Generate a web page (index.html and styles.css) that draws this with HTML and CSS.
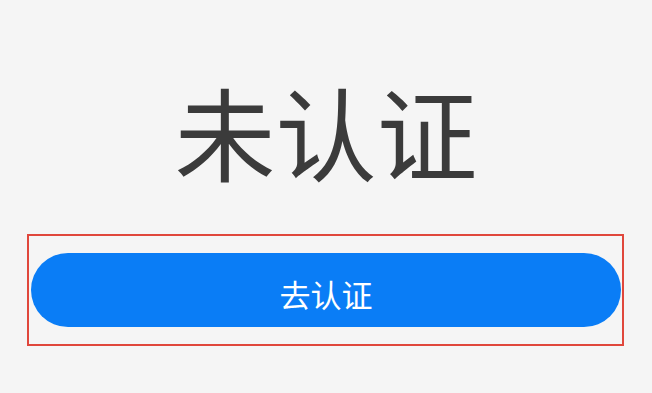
FILE: index.html
```html
<!DOCTYPE html>
<html lang="zh-CN">
<head>
    <meta charset="UTF-8">
    <meta name="viewport" content="width=device-width, initial-scale=1.0">
    <title>未认证</title>
    <link rel="stylesheet" href="styles.css">
</head>
<body>
    <!-- Status -->
    <main class="page">
        <h1 class="status">未认证</h1>

        <!-- Verify Action -->
        <div class="action-frame">
            <button class="verify-btn">去认证</button>
        </div>
    </main>
</body>
</html>
```

FILE: styles.css
```css
/* Global Styles */
body {
    margin: 0;
    padding: 0;
    background-color: #f5f5f5;
    font-family: "Noto Sans CJK SC", "Noto Sans", sans-serif;
}

.page {
    height: 393px;
    padding-top: 70px;
    box-sizing: border-box;
}

.status {
    margin: 0;
    text-align: center;
    font-size: 101px;
    font-weight: normal;
    line-height: 120px;
    color: #3b3b3b;
}

.action-frame {
    margin: 44px 28px 0 27px;
    height: 112px;
    border: 2px solid #e0473c;
    box-sizing: border-box;
    padding: 17px 1px 0 2px;
}

.verify-btn {
    display: block;
    width: 100%;
    height: 74px;
    border: none;
    border-radius: 37px;
    background-color: #0a7df6;
    color: #ffffff;
    font-family: inherit;
    font-size: 31px;
    padding-top: 8px;
}
```
